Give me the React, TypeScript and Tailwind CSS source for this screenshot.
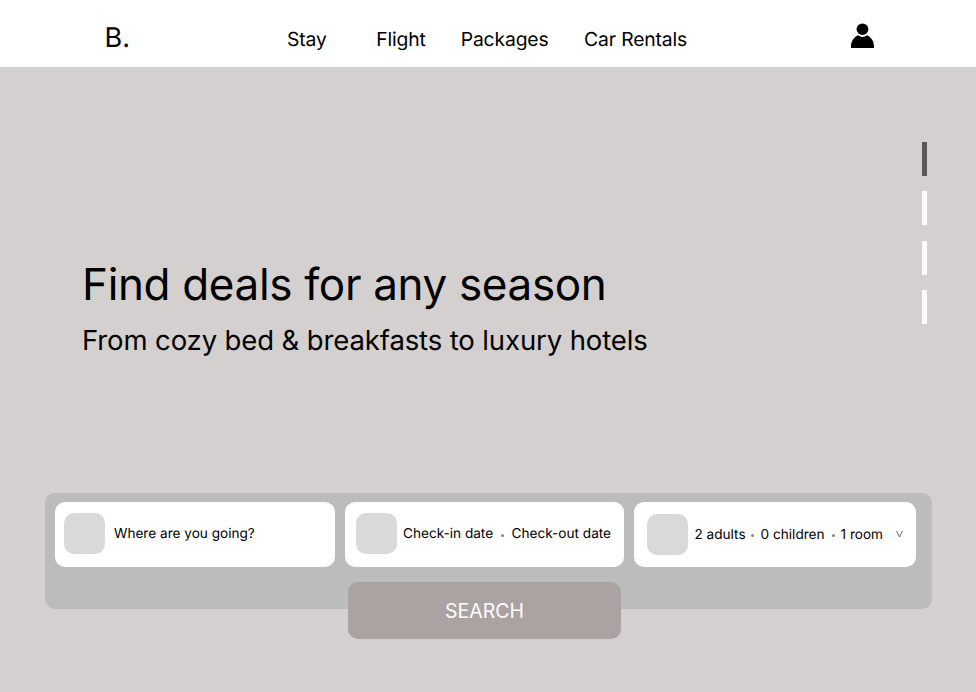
const nav = [
  { label: "Stay", left: "ml-[157px]" },
  { label: "Flight", left: "ml-[49.500px]" },
  { label: "Packages", left: "ml-[35px]" },
  { label: "Car Rentals", left: "ml-[35.500px]" },
];

export default function App() {
  return (
    <div className="flex h-[692px] w-[976px] flex-col overflow-hidden bg-[#d4d0cf] font-['Inter',sans-serif] text-black [text-rendering:geometricPrecision]">
      <header className="flex h-[67px] shrink-0 items-start bg-white pl-[104.500px]">
        <span className="mt-[21px] text-[27px] leading-[34px]">B.</span>
        <nav className="mt-[27px] flex text-[19.300px] leading-6 tracking-[-0.12px]">
          {nav.map((n) => (
            <a key={n.label} className={"whitespace-nowrap " + n.left}>{n.label}</a>
          ))}
        </nav>
        <svg className="mt-[23px] mr-[102px] ml-auto h-[25px] w-[23px]" viewBox="0 0 23 25">
          <ellipse cx="11.500" cy="6.200" rx="5.900" ry="5.800" />
          <path d="M0 25v-1.500c0-5 2.500-9.300 7-11.300a7.500 7.500 0 0 0 9 0c4.500 2 7 6.300 7 11.300V25z" />
        </svg>
      </header>
      <main className="flex grow flex-col">
        <section className="flex h-[426px] justify-between pr-[49px] pl-[82px]">
          <div className="pt-[190px]">
            <h1 className="text-[44px] leading-[55px] tracking-[-0.34px] whitespace-nowrap">Find deals for any season</h1>
            <p className="mt-[11px] text-[27.500px] leading-[35px] tracking-[-0.12px] whitespace-nowrap">From cozy bed &amp; breakfasts to luxury hotels</p>
          </div>
          <div className="flex flex-col gap-[15.500px] pt-[74.600px]">
            <i className="h-[34px] w-[5px] bg-[#595757]" />
            <i className="h-[34px] w-[5px] bg-[#fffafa]" />
            <i className="h-[34px] w-[5px] bg-[#fffafa]" />
            <i className="h-[34px] w-[5px] bg-[#fffafa]" />
          </div>
        </section>
        <section className="ml-[45px] flex h-[116px] w-[887px] flex-col rounded-[10px] bg-[#bcbcbc] pt-[9px] pl-[10px]">
          <div className="flex gap-[10px] text-[13.600px] leading-[22px] whitespace-nowrap">
            <div className="flex h-[65px] w-[280px] items-center rounded-[10px] bg-white pb-[2px] pl-[9px]">
              <span className="mr-[9px] h-[41px] w-[41px] rounded-[10px] bg-[#d9d9d9]" />
              Where are you going?
            </div>
            <div className="flex h-[65px] w-[279px] items-center rounded-[10px] bg-white pb-[2px] pl-[11px]">
              <span className="mr-[6px] h-[41px] w-[41px] rounded-[10px] bg-[#d9d9d9]" />
              Check-in date
              <i className="mt-[3px] mr-[7.500px] ml-[8px] h-[3px] w-[3px] rounded-full bg-[#888]" />
              Check-out date
            </div>
            <div className="flex h-[65px] w-[282px] items-center rounded-[10px] bg-white pl-[13px]">
              <span className="mr-[6.500px] h-[41px] w-[41px] rounded-[10px] bg-[#d9d9d9]" />
              2 adults
              <i className="mt-[2px] mr-[7px] ml-[5px] h-[3px] w-[3px] rounded-full bg-[#888]" />
              0 children
              <i className="mt-[2px] mr-[5.500px] ml-[7.500px] h-[3px] w-[3px] rounded-full bg-[#888]" />
              1 room
              <svg className="ml-[12.500px] h-[7px] w-[7px] fill-none stroke-[#666]" viewBox="0 0 7 7"><path d="m.5 0 3 6 3-6" /></svg>
            </div>
          </div>
          <button className="mt-[15px] ml-[293px] h-[57px] w-[273px] shrink-0 rounded-[10px] bg-[#aaa3a2] pt-[2px] text-[19.500px] text-white">SEARCH</button>
        </section>
      </main>
    </div>
  );
}
